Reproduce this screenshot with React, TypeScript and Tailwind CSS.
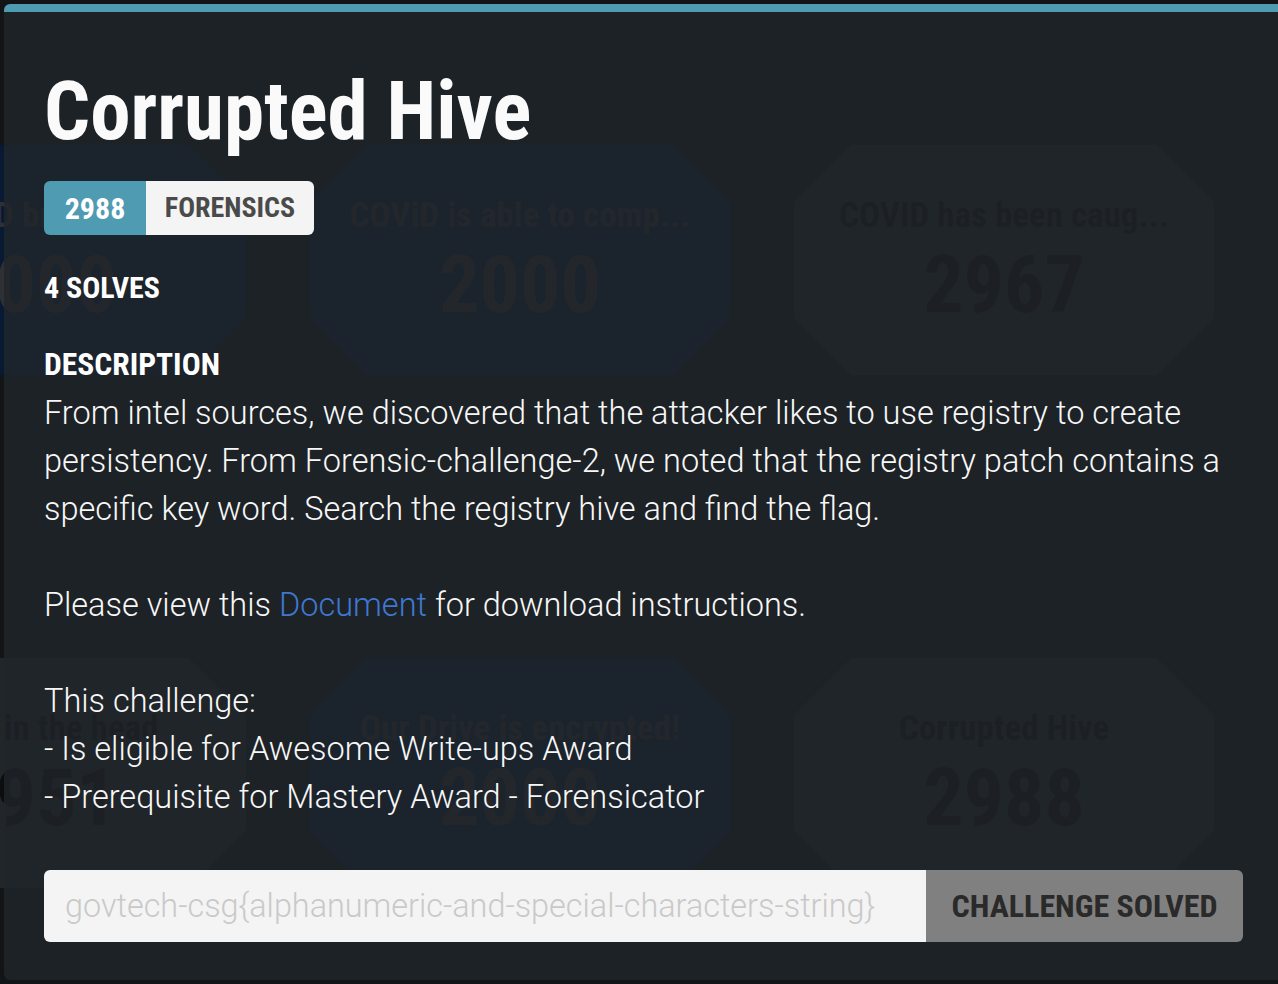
import React from 'react'

type Tone = 'blue' | 'gray'

const cardRows: { title: string; points: string; tone: Tone }[][] = [
  [
    { title: 'COViD breach...', points: '2000', tone: 'blue' },
    { title: 'COViD is able to comp...', points: '2000', tone: 'blue' },
    { title: 'COVID has been caug...', points: '2967', tone: 'gray' },
  ],
  [
    { title: 'Bullet in the head', points: '2951', tone: 'gray' },
    { title: 'Our Drive is encrypted!', points: '2000', tone: 'blue' },
    { title: 'Corrupted Hive', points: '2988', tone: 'gray' },
  ],
]

const heading = "font-['Roboto_Condensed','Noto_Sans','DejaVu_Sans_Condensed',sans-serif] font-stretch-condensed font-bold"

function ChallengeCard({ title, points, tone }: { title: string; points: string; tone: Tone }) {
  return (
    <div
      className={`w-[420px] h-[230px] shrink-0 flex flex-col items-center pt-[53px] [clip-path:polygon(57px_0,calc(100%_-_57px)_0,100%_57px,100%_calc(100%_-_57px),calc(100%_-_57px)_100%,57px_100%,0_calc(100%_-_57px),0_57px)] ${
        tone === 'blue' ? 'bg-[#081934] text-[#2e3034]' : 'bg-[#222629] text-[#0c0d0f]'
      }`}
    >
      <div className={`${heading} text-[35px] leading-[35px] whitespace-nowrap`}>{title}</div>
      <div className={`${heading} text-[80px] leading-[80px] mt-[12px]`}>{points}</div>
    </div>
  )
}

export default function App() {
  return (
    <div className="relative w-[1278px] h-[984px] overflow-hidden bg-[#121416]">
      {/* challenge board behind the modal */}
      <div className="flex flex-col gap-[283px] pt-[145px] ml-[-174px]">
        {cardRows.map((row, i) => (
          <div key={i} className="flex gap-[64px]">
            {row.map((c) => (
              <ChallengeCard key={c.title} {...c} />
            ))}
          </div>
        ))}
      </div>

      {/* challenge modal */}
      <div className="absolute left-[4px] top-[4px] bottom-[4px] w-[1279px] rounded-[6px] border-t-[8px] border-[#4f9bb1] bg-[#21252a]/80 px-[40px] pt-[60px] text-white">
        <h1 className={`${heading} text-[81px] leading-[80px] text-[#fafafa]`}>Corrupted Hive</h1>

        <div className={`${heading} mt-[29px] flex h-[54px] w-fit overflow-hidden rounded-[6px] text-[28px]`}>
          <div className="flex w-[102px] items-center justify-center bg-[#4f9bb1] text-[30px] text-white">2988</div>
          <div className="flex w-[168px] items-center justify-center bg-[#f4f4f4] text-[#4a4a4a]">FORENSICS</div>
        </div>

        <div className={`${heading} mt-[38px] text-[30px] leading-[30px]`}>4 SOLVES</div>

        <div className={`${heading} mt-[46px] text-[31.5px] leading-[31px]`}>DESCRIPTION</div>

        <p className="mt-[9px] font-['Roboto',sans-serif] font-light text-[32.5px] leading-[48px] text-[#f7f7f7] whitespace-nowrap">
          From intel sources, we discovered that the attacker likes to use registry to create
          <br />
          persistency. From Forensic-challenge-2, we noted that the registry patch contains a
          <br />
          specific key word. Search the registry hive and find the flag.
          <br />
          <br />
          Please view this <a href="#" className="text-[#3f78d1]">Document</a> for download instructions.
          <br />
          <br />
          This challenge:
          <br />
          - Is eligible for Awesome Write-ups Award
          <br />
          - Prerequisite for Mastery Award - Forensicator
        </p>

        <div className="mt-[49px] flex h-[72px]">
          <input
            className="h-full flex-1 rounded-l-[6px] bg-[#f4f4f4] pl-[21px] font-['Roboto',sans-serif] font-light text-[32.4px] text-[#333] placeholder:text-[#c9c9c9] outline-none"
            placeholder="govtech-csg{alphanumeric-and-special-characters-string}"
          />
          <button className={`${heading} h-full w-[317px] rounded-r-[6px] bg-[#808080] text-[32px] text-[#2a2a2a]`}>
            CHALLENGE SOLVED
          </button>
        </div>
      </div>
    </div>
  )
}
